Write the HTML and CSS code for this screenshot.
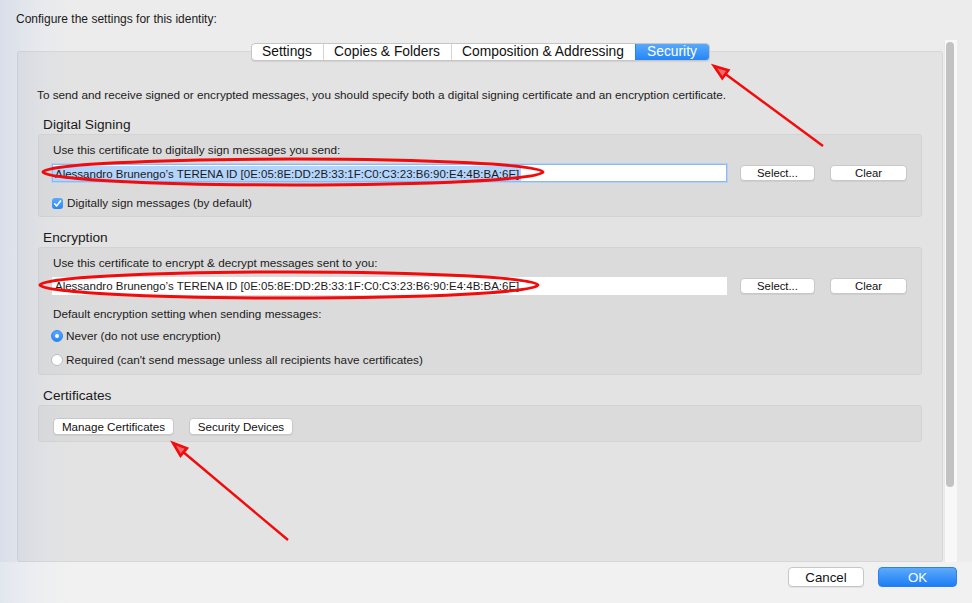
FILE: index.html
```html
<!DOCTYPE html>
<html>
<head>
<meta charset="utf-8">
<link rel="stylesheet" href="styles.css">
</head>
<body>
<div class="window">
  <p class="intro">Configure the settings for this identity:</p>
  <div class="main">
    <div class="tabview">
      <div class="tabs">
        <span class="tab t1">Settings</span>
        <span class="tab t2">Copies &amp; Folders</span>
        <span class="tab t3">Composition &amp; Addressing</span>
        <span class="tab t4 active">Security</span>
      </div>
      <div class="panel">
        <p class="desc">To send and receive signed or encrypted messages, you should specify both a digital signing certificate and an encryption certificate.</p>

        <h2 class="heading first">Digital Signing</h2>
        <div class="box box-sign">
          <p class="label">Use this certificate to digitally sign messages you send:</p>
          <div class="certrow">
            <div class="field focused"><span class="sel">Alessandro Brunengo’s TERENA ID [0E:05:8E:DD:2B:33:1F:C0:C3:23:B6:90:E4:4B:BA:6E]</span></div>
            <button class="btn sel-btn">Select...</button>
            <button class="btn clear-btn">Clear</button>
          </div>
          <div class="check-row">
            <span class="checkbox"><svg width="11" height="11" viewBox="0 0 11 11"><path d="M2.6 5.8 L4.6 7.9 L8.5 2.9" fill="none" stroke="#fff" stroke-width="1.6" stroke-linecap="round" stroke-linejoin="round"/></svg></span>
            <span>Digitally sign messages (by default)</span>
          </div>
        </div>

        <h2 class="heading">Encryption</h2>
        <div class="box box-enc">
          <p class="label">Use this certificate to encrypt &amp; decrypt messages sent to you:</p>
          <div class="certrow">
            <div class="field plain"><span class="txt">Alessandro Brunengo’s TERENA ID [0E:05:8E:DD:2B:33:1F:C0:C3:23:B6:90:E4:4B:BA:6E]</span></div>
            <button class="btn sel-btn">Select...</button>
            <button class="btn clear-btn">Clear</button>
          </div>
          <p class="label label-default">Default encryption setting when sending messages:</p>
          <div class="radio-row r-never"><span class="radio on"></span><span>Never (do not use encryption)</span></div>
          <div class="radio-row r-req"><span class="radio"></span><span>Required (can't send message unless all recipients have certificates)</span></div>
        </div>

        <h2 class="heading">Certificates</h2>
        <div class="box box-cert">
          <button class="btn manage-btn">Manage Certificates</button>
          <button class="btn devices-btn">Security Devices</button>
        </div>
      </div>
    </div>
    <div class="scrollbar"><div class="thumb"></div></div>
  </div>
  <div class="footer">
    <button class="fbtn cancel">Cancel</button>
    <button class="fbtn ok">OK</button>
  </div>
</div>

<svg class="marks" width="972" height="603" viewBox="0 0 972 603">
  <ellipse cx="293" cy="172" rx="250" ry="13" fill="none" stroke="#f40a0a" stroke-width="3"/>
  <ellipse cx="289" cy="285" rx="249" ry="13" fill="none" stroke="#f40a0a" stroke-width="3"/>
  <line x1="823" y1="146" x2="724" y2="73" stroke="#f40a0a" stroke-width="2.4"/>
  <polygon points="714,66 728.3,70.3 722.3,78.3" fill="#f56a6a" stroke="#f40a0a" stroke-width="2.6" stroke-linejoin="miter"/>
  <line x1="288" y1="540" x2="182" y2="451" stroke="#f40a0a" stroke-width="2.4"/>
  <polygon points="173,443 186.9,448.2 180.5,455.8" fill="#f56a6a" stroke="#f40a0a" stroke-width="2.6" stroke-linejoin="miter"/>
</svg>
</body>
</html>
```

FILE: styles.css
```css
* { box-sizing: border-box; }

html, body {
  margin: 0;
  padding: 0;
}

body {
  width: 972px;
  height: 603px;
  overflow: hidden;
  position: relative;
  background: linear-gradient(90deg, #d9dfe9 0px, #e1e5ec 22px, #e9eaed 45px, #ececec 70px, #ececec 100%);
  font-family: "Liberation Sans", Arial, Helvetica, sans-serif;
  color: #1b1b1b;
}

.window {
  display: flex;
  flex-direction: column;
  height: 603px;
}

.intro {
  margin: 0;
  height: 40px;
  padding: 12px 0 0 16px;
  font-size: 12px;
  line-height: 14px;
}

.main {
  display: flex;
  height: 522px;
}

.tabview {
  margin-left: 17px;
  width: 926px;
  display: flex;
  flex-direction: column;
  padding-top: 3px;
}

.tabs {
  align-self: center;
  display: flex;
  height: 18px;
  position: relative;
  z-index: 1;
  background: #fff;
  border: 1px solid #c6c6c6;
  border-radius: 4px;
  box-shadow: 0 1px 1px rgba(0, 0, 0, 0.08);
  overflow: hidden;
}

.tab {
  display: flex;
  align-items: center;
  justify-content: center;
  font-size: 13.8px;
  line-height: 16px;
  color: #111;
  border-left: 1px solid #d4d4d4;
}

.t1 { width: 71px; border-left: none; }
.t2 { width: 128px; }
.t3 { width: 184px; }
.t4 { width: 74px; }

.tab.active {
  background: linear-gradient(#5aa9fb, #2486f7);
  color: #fff;
  border-left-color: #2a82ee;
}

.panel {
  margin-top: -10px;
  flex: 1;
  background: rgba(0, 0, 0, 0.035);
  border: 1px solid rgba(0, 0, 0, 0.055);
  border-radius: 3px;
  padding: 36px 20px 0 20px;
}

.desc {
  margin: 0 0 0 -1px;
  font-size: 11.75px;
  line-height: 14px;
  height: 14px;
}

.heading {
  margin: 13px 0 1px 5px;
  font-size: 13.7px;
  font-weight: normal;
  line-height: 16px;
  color: #1a1a1a;
}

.heading.first {
  margin-top: 15px;
}

.box {
  background: rgba(0, 0, 0, 0.035);
  border: 1px solid rgba(0, 0, 0, 0.04);
  border-radius: 3px;
  padding: 8px 14px 7px 14px;
}

.box-sign {
  padding-bottom: 6px;
}

.label {
  margin: 0;
  font-size: 11.75px;
  line-height: 14px;
}

.certrow {
  display: flex;
  align-items: center;
  margin-top: 7px;
  height: 18px;
}

.field {
  flex: 1;
  height: 18px;
  margin-left: -1px;
  margin-right: 13px;
  background: #fff;
  font-size: 11.5px;
  line-height: 14px;
  padding: 2px 0 0 1px;
  white-space: nowrap;
  overflow: hidden;
}

.field.focused {
  border: 1px solid #8bb9f0;
  box-shadow: 0 0 0 1px #b3d1f6;
  padding: 1px 0 0 0;
}

.sel {
  background: #b3d4fb;
  padding: 1px 2px 0 2px;
  display: inline-block;
  line-height: 14px;
}

.txt {
  padding-left: 2px;
}

.btn {
  font-family: inherit;
  font-size: 11.3px;
  line-height: 13px;
  height: 16px;
  padding: 0;
  background: #fff;
  color: #111;
  border: 1px solid #c8c8c8;
  border-radius: 4px;
  box-shadow: 0 1px 0 rgba(0, 0, 0, 0.06);
}

.sel-btn { width: 75px; margin-right: 15px; }
.clear-btn { width: 77px; }

.check-row {
  display: flex;
  align-items: center;
  margin-top: 14px;
  margin-left: -1px;
  font-size: 11.75px;
  line-height: 14px;
  height: 14px;
  gap: 4px;
}

.checkbox {
  width: 11px;
  height: 11px;
  border-radius: 3px;
  background: linear-gradient(#5ba9fb, #2a86f6);
  display: flex;
}

.label-default {
  margin-top: 12px;
}

.radio-row {
  display: flex;
  align-items: center;
  margin-left: -2px;
  font-size: 11.75px;
  line-height: 14px;
  height: 14px;
  gap: 3px;
}

.r-never { margin-top: 8px; }
.r-req { margin-top: 10px; }

.radio {
  width: 12px;
  height: 12px;
  border-radius: 50%;
  background: #fff;
  border: 1px solid #bdbdbd;
  display: flex;
  align-items: center;
  justify-content: center;
}

.radio.on {
  background: linear-gradient(#5ba9fb, #2a86f6);
  border-color: #2f86ee;
}

.radio.on::after {
  content: "";
  width: 4px;
  height: 4px;
  border-radius: 50%;
  background: #fff;
}

.box-cert {
  padding: 12px 14px 6px 14px;
  display: flex;
  gap: 15px;
}

.box-cert .btn {
  height: 17px;
  font-size: 11.6px;
}

.manage-btn { width: 121px; margin-left: 0; }
.devices-btn { width: 104px; }

.scrollbar {
  margin-left: 1px;
  width: 13px;
  height: 522px;
  background: #f8f8f8;
  border-left: 1px solid #e9e9e9;
  padding: 2px 2px 0 1px;
}

.thumb {
  width: 8px;
  height: 445px;
  background: #c2c2c2;
  border-radius: 4px;
}

.footer {
  flex: 1;
  display: flex;
  justify-content: flex-end;
  align-items: flex-start;
  padding: 5px 15px 0 0;
  gap: 14px;
  background: rgba(255, 255, 255, 0.25);
}

.fbtn {
  font-family: inherit;
  font-size: 13.3px;
  height: 20px;
  padding: 0;
  border-radius: 4px;
}

.cancel {
  width: 76px;
  background: #fff;
  color: #111;
  border: 1px solid #c6c6c6;
  box-shadow: 0 1px 0 rgba(0, 0, 0, 0.06);
}

.ok {
  width: 79px;
  background: linear-gradient(#5daafb, #1c7ef5);
  color: #fff;
  border: 1px solid #2a80ec;
}

.marks {
  position: absolute;
  left: 0;
  top: 0;
  pointer-events: none;
}
```
